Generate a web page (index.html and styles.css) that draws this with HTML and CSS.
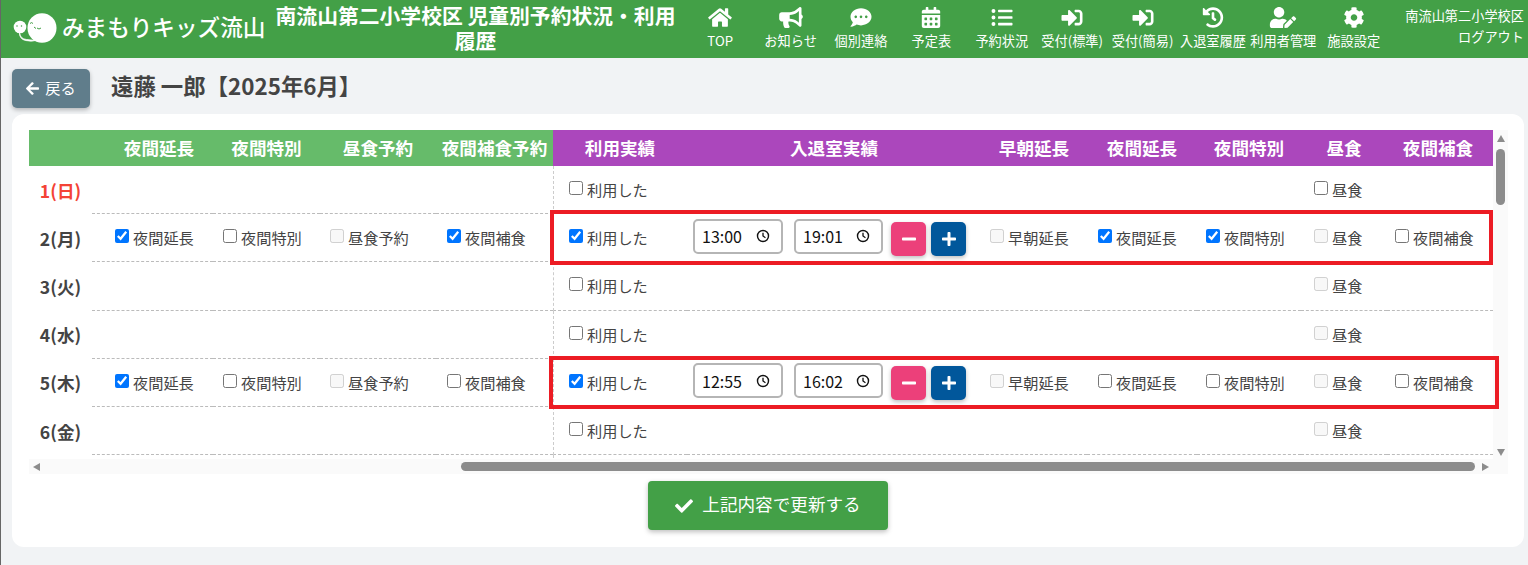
FILE: index.html
```html
<!DOCTYPE html>
<html lang="ja">
<head>
<meta charset="utf-8">
<title>児童別予約状況・利用履歴</title>
<link rel="stylesheet" href="styles.css">
</head>
<body>
<svg class="sprite" xmlns="http://www.w3.org/2000/svg">
  <symbol id="i-home" viewBox="0 0 576 512"><path d="M280.37 148.26L96 300.11V464a16 16 0 0 0 16 16l112.06-.29a16 16 0 0 0 15.92-16V368a16 16 0 0 1 16-16h64a16 16 0 0 1 16 16v95.64a16 16 0 0 0 16 16.05L464 480a16 16 0 0 0 16-16V300L295.67 148.26a12.19 12.19 0 0 0-15.3 0zM571.6 251.47L488 182.56V44.05a12 12 0 0 0-12-12h-56a12 12 0 0 0-12 12v72.61L318.47 43a48 48 0 0 0-61 0L4.34 251.47a12 12 0 0 0-1.6 16.9l25.5 31A12 12 0 0 0 45.15 301l235.22-193.74a12.19 12.19 0 0 1 15.3 0L530.9 301a12 12 0 0 0 16.9-1.6l25.5-31a12 12 0 0 0-1.7-16.93z"/></symbol>
  <symbol id="i-bullhorn" viewBox="0 0 576 512"><path d="M576 240c0-23.63-12.95-44.04-32-55.12V32.01C544 23.26 537.02 0 512 0c-7.12 0-14.19 2.38-19.98 7.02l-85.03 68.03C364.28 109.19 310.66 128 256 128H64c-35.35 0-64 28.65-64 64v96c0 35.35 28.65 64 64 64h33.7c-1.39 10.48-2.18 21.14-2.18 32 0 39.77 9.26 77.35 25.56 110.94 5.19 10.69 16.52 17.06 28.4 17.06h74.28c26.05 0 41.69-29.84 25.9-50.56-16.4-21.52-26.15-48.36-26.15-77.44 0-11.11 1.62-21.79 4.41-32H256c54.66 0 108.28 18.81 150.98 52.95l85.03 68.03a32.023 32.023 0 0 0 19.98 7.02c24.92 0 32-22.78 32-32V295.13C563.05 284.04 576 263.63 576 240zm-96 141.42l-33.05-26.44C392.95 311.78 325.12 288 256 288v-96c69.12 0 136.95-23.78 190.95-66.98L480 98.58v282.84z"/></symbol>
  <symbol id="i-comment" viewBox="0 0 512 512"><path d="M256 32C114.6 32 0 125.1 0 240c0 49.6 21.4 95 57 130.7C44.5 421.1 2.7 466 2.2 466.5c-2.2 2.3-2.8 5.7-1.5 8.7S4.8 480 8 480c66.3 0 116-31.8 140.6-51.4 32.7 12.3 69 19.4 107.4 19.4 141.4 0 256-93.1 256-208S397.4 32 256 32zM128 272c-17.7 0-32-14.3-32-32s14.3-32 32-32 32 14.3 32 32-14.3 32-32 32zm128 0c-17.7 0-32-14.3-32-32s14.3-32 32-32 32 14.3 32 32-14.3 32-32 32zm128 0c-17.7 0-32-14.3-32-32s14.3-32 32-32 32 14.3 32 32-14.3 32-32 32z"/></symbol>
  <symbol id="i-calendar" viewBox="0 0 448 512"><path d="M0 464c0 26.5 21.5 48 48 48h352c26.5 0 48-21.5 48-48V192H0v272zm320-196c0-6.6 5.4-12 12-12h40c6.6 0 12 5.4 12 12v40c0 6.6-5.4 12-12 12h-40c-6.6 0-12-5.4-12-12v-40zm0 128c0-6.6 5.4-12 12-12h40c6.6 0 12 5.4 12 12v40c0 6.6-5.4 12-12 12h-40c-6.6 0-12-5.4-12-12v-40zM192 268c0-6.6 5.4-12 12-12h40c6.6 0 12 5.4 12 12v40c0 6.6-5.4 12-12 12h-40c-6.6 0-12-5.4-12-12v-40zm0 128c0-6.6 5.4-12 12-12h40c6.6 0 12 5.4 12 12v40c0 6.6-5.4 12-12 12h-40c-6.6 0-12-5.4-12-12v-40zM64 268c0-6.6 5.4-12 12-12h40c6.6 0 12 5.4 12 12v40c0 6.6-5.4 12-12 12H76c-6.6 0-12-5.4-12-12v-40zm0 128c0-6.6 5.4-12 12-12h40c6.6 0 12 5.4 12 12v40c0 6.6-5.4 12-12 12H76c-6.6 0-12-5.4-12-12v-40zM400 64h-48V16c0-8.8-7.2-16-16-16h-32c-8.8 0-16 7.2-16 16v48H160V16c0-8.8-7.2-16-16-16h-32c-8.8 0-16 7.2-16 16v48H48C21.5 64 0 85.5 0 112v48h448v-48c0-26.5-21.5-48-48-48z"/></symbol>
  <symbol id="i-list" viewBox="0 0 512 512"><path d="M48 48a48 48 0 1 0 48 48 48 48 0 0 0-48-48zm0 160a48 48 0 1 0 48 48 48 48 0 0 0-48-48zm0 160a48 48 0 1 0 48 48 48 48 0 0 0-48-48zm448 16H176a16 16 0 0 0-16 16v32a16 16 0 0 0 16 16h320a16 16 0 0 0 16-16v-32a16 16 0 0 0-16-16zm0-320H176a16 16 0 0 0-16 16v32a16 16 0 0 0 16 16h320a16 16 0 0 0 16-16V80a16 16 0 0 0-16-16zm0 160H176a16 16 0 0 0-16 16v32a16 16 0 0 0 16 16h320a16 16 0 0 0 16-16v-32a16 16 0 0 0-16-16z"/></symbol>
  <symbol id="i-signin" viewBox="0 0 512 512"><path d="M416 448h-84c-6.6 0-12-5.4-12-12v-40c0-6.6 5.4-12 12-12h84c17.7 0 32-14.3 32-32V160c0-17.7-14.3-32-32-32h-84c-6.6 0-12-5.4-12-12V76c0-6.6 5.4-12 12-12h84c53 0 96 43 96 96v192c0 53-43 96-96 96zm-47-201L201 79c-15-15-41-4.5-41 17v96H24c-13.3 0-24 10.7-24 24v96c0 13.3 10.7 24 24 24h136v96c0 21.5 26 32 41 17l168-168c9.3-9.4 9.3-24.6 0-34z"/></symbol>
  <symbol id="i-history" viewBox="0 0 512 512"><path d="M504 255.531c.253 136.64-111.18 248.372-247.82 248.468-59.015.042-113.223-20.53-155.822-54.911-11.077-8.94-11.905-25.541-1.839-35.607l11.267-11.267c8.609-8.609 22.353-9.551 31.891-1.984C173.062 425.135 212.781 440 256 440c101.705 0 184-82.311 184-184 0-101.705-82.311-184-184-184-48.814 0-93.149 18.969-126.068 49.932l50.754 50.754c10.08 10.08 2.941 27.314-11.313 27.314H24c-8.837 0-16-7.163-16-16V38.627c0-14.254 17.234-21.393 27.314-11.314l49.372 49.372C129.209 34.136 189.552 8 256 8c136.81 0 247.747 110.78 248 247.531zm-180.912 78.784l9.823-12.63c8.138-10.463 6.253-25.542-4.21-33.679L288 256.349V152c0-13.255-10.745-24-24-24h-16c-13.255 0-24 10.745-24 24v135.651l65.409 50.874c10.463 8.137 25.541 6.253 33.679-4.21z"/></symbol>
  <symbol id="i-useredit" viewBox="0 0 640 512"><path d="M224 256c70.7 0 128-57.3 128-128S294.7 0 224 0 96 57.3 96 128s57.3 128 128 128zm89.6 32h-16.7c-22.2 10.2-46.9 16-72.9 16s-50.6-5.8-72.9-16h-16.7C60.2 288 0 348.2 0 422.4V464c0 26.5 21.5 48 48 48h274.9c-2.4-6.8-3.4-14-2.6-21.3l6.8-60.9 1.2-11.1 7.9-7.9 77.3-77.3c-24.5-27.7-60-45.5-99.9-45.5zm45.3 145.3l-6.8 61c-1.1 10.2 7.5 18.8 17.6 17.6l60.9-6.8 137.9-137.9-71.7-71.7-137.9 137.8zM633 268.9L595.1 231c-9.3-9.3-24.5-9.3-33.8 0l-37.8 37.8-4.1 4.1 71.8 71.7 41.8-41.8c9.3-9.4 9.3-24.5 0-33.9z"/></symbol>
  <symbol id="i-cog" viewBox="0 0 512 512"><path d="M487.4 315.7l-42.6-24.6c4.3-23.2 4.3-47 0-70.2l42.6-24.6c4.9-2.8 7.1-8.6 5.5-14-11.1-35.6-30-67.8-54.7-94.6-3.8-4.1-10-5.1-14.8-2.3L380.8 110c-17.9-15.4-38.5-27.3-60.8-35.1V25.8c0-5.6-3.9-10.5-9.4-11.7-36.7-8.2-74.3-7.8-109.2 0-5.5 1.2-9.4 6.1-9.4 11.7V75c-22.2 7.9-42.8 19.8-60.8 35.1L88.7 85.5c-4.9-2.8-11-1.9-14.8 2.3-24.7 26.7-43.6 58.9-54.7 94.6-1.7 5.4.6 11.2 5.5 14L67.3 221c-4.3 23.2-4.3 47 0 70.2l-42.6 24.6c-4.9 2.8-7.1 8.6-5.5 14 11.1 35.6 30 67.8 54.7 94.6 3.8 4.1 10 5.1 14.8 2.3l42.6-24.6c17.9 15.4 38.5 27.3 60.8 35.1v49.2c0 5.6 3.9 10.5 9.4 11.7 36.7 8.2 74.3 7.8 109.2 0 5.5-1.2 9.4-6.1 9.4-11.7v-49.2c22.2-7.9 42.8-19.8 60.8-35.1l42.6 24.6c4.9 2.8 11 1.9 14.8-2.3 24.7-26.7 43.6-58.9 54.7-94.6 1.5-5.5-.7-11.3-5.6-14.1zM256 336c-44.1 0-80-35.9-80-80s35.9-80 80-80 80 35.9 80 80-35.9 80-80 80z"/></symbol>
  <symbol id="i-check" viewBox="0 0 512 512"><path d="M173.898 439.404l-166.4-166.4c-9.997-9.997-9.997-26.206 0-36.204l36.203-36.204c9.997-9.998 26.207-9.998 36.204 0L192 312.69 432.095 72.596c9.997-9.997 26.207-9.997 36.204 0l36.203 36.204c9.997 9.997 9.997 26.206 0 36.204l-294.4 294.401c-9.998 9.997-26.207 9.997-36.204-.001z"/></symbol>
  <symbol id="i-left" viewBox="0 0 448 512"><path d="M257.5 445.1l-22.2 22.2c-9.4 9.4-24.6 9.4-33.9 0L7 273c-9.4-9.4-9.4-24.6 0-33.9L201.4 44.7c9.4-9.4 24.6-9.4 33.9 0l22.2 22.2c9.5 9.5 9.3 25-.4 34.3L136.6 216H424c13.3 0 24 10.7 24 24v32c0 13.3-10.7 24-24 24H136.6l120.5 114.8c9.8 9.3 10 24.8.4 34.3z"/></symbol>
  <symbol id="i-plus" viewBox="0 0 448 512"><path d="M416 208H272V64c0-17.67-14.33-32-32-32h-32c-17.67 0-32 14.33-32 32v144H32c-17.67 0-32 14.33-32 32v32c0 17.67 14.33 32 32 32h144v144c0 17.67 14.33 32 32 32h32c17.67 0 32-14.33 32-32V304h144c17.67 0 32-14.33 32-32v-32c0-17.67-14.33-32-32-32z"/></symbol>
  <symbol id="i-minus" viewBox="0 0 448 512"><path d="M416 208H32c-17.67 0-32 14.33-32 32v32c0 17.67 14.33 32 32 32h384c17.67 0 32-14.33 32-32v-32c0-17.67-14.33-32-32-32z"/></symbol>
  <symbol id="i-clock" viewBox="0 0 16 16"><circle cx="8" cy="8" r="6.300" fill="none" stroke="currentColor" stroke-width="1.600"/><path d="M8 4.200V8l2.800 2" fill="none" stroke="currentColor" stroke-width="1.500"/></symbol>
</svg>

<header class="topbar">
  <a class="logo" href="#">
    <svg class="logo-mark" viewBox="0 0 50 34" xmlns="http://www.w3.org/2000/svg" aria-hidden="true">
      <ellipse cx="33" cy="17" rx="14.500" ry="14.800" fill="#fff"/>
      <path d="M21 12.500q1.500-1.800 3 0M28 17q2 2 4 0M25 16l2 1.500" fill="none" stroke="#43a047" stroke-width="1"/>
      <circle cx="11" cy="16" r="6.300" fill="#fff"/>
      <path d="M8 15h.01M12.500 15h.01" stroke="#43a047" stroke-width="1.500" stroke-linecap="round"/>
      <path d="M10.500 22q1 6 7 6.500q6 1 12 .5q-7 2-13 .5q-6-1.500-6-7.500z" fill="#fff" stroke="#fff" stroke-width=".8"/>
    </svg>
    <span class="logo-text">みまもりキッズ流山</span>
  </a>
  <h1 class="page-title">南流山第二小学校区 児童別予約状況・利用履歴</h1>
  <nav class="mainnav">
    <a class="nav-item" href="#"><svg class="nav-icon"><use href="#i-home"/></svg><span>TOP</span></a>
    <a class="nav-item" href="#"><svg class="nav-icon"><use href="#i-bullhorn"/></svg><span>お知らせ</span></a>
    <a class="nav-item" href="#"><svg class="nav-icon"><use href="#i-comment"/></svg><span>個別連絡</span></a>
    <a class="nav-item" href="#"><svg class="nav-icon"><use href="#i-calendar"/></svg><span>予定表</span></a>
    <a class="nav-item" href="#"><svg class="nav-icon"><use href="#i-list"/></svg><span>予約状況</span></a>
    <a class="nav-item" href="#"><svg class="nav-icon"><use href="#i-signin"/></svg><span>受付(標準)</span></a>
    <a class="nav-item" href="#"><svg class="nav-icon"><use href="#i-signin"/></svg><span>受付(簡易)</span></a>
    <a class="nav-item" href="#"><svg class="nav-icon"><use href="#i-history"/></svg><span>入退室履歴</span></a>
    <a class="nav-item" href="#"><svg class="nav-icon"><use href="#i-useredit"/></svg><span>利用者管理</span></a>
    <a class="nav-item" href="#"><svg class="nav-icon"><use href="#i-cog"/></svg><span>施設設定</span></a>
  </nav>
  <div class="account">
    <span>南流山第二小学校区</span>
    <a href="#">ログアウト</a>
  </div>
</header>

<main class="content">
  <div class="toolbar">
    <a class="back-btn" href="#"><svg class="back-icon"><use href="#i-left"/></svg><span class="back-label">戻る</span></a>
    <h2 class="child-name">遠藤 一郎【2025年6月】</h2>
  </div>

  <section class="card">
    <div class="frame">
      <div class="viewport">
        <table class="days">
          <colgroup>
            <col class="c-date"><col class="c-a"><col class="c-b"><col class="c-c"><col class="c-d">
            <col class="c-e"><col class="c-f"><col class="c-g"><col class="c-h"><col class="c-i"><col class="c-j"><col class="c-k">
          </colgroup>
          <thead>
            <tr>
              <th class="green"></th>
              <th class="green first">夜間延長</th>
              <th class="green">夜間特別</th>
              <th class="green">昼食予約</th>
              <th class="green">夜間補食予約</th>
              <th class="purple">利用実績</th>
              <th class="purple">入退室実績</th>
              <th class="purple">早朝延長</th>
              <th class="purple">夜間延長</th>
              <th class="purple">夜間特別</th>
              <th class="purple">昼食</th>
              <th class="purple last">夜間補食</th>
            </tr>
          </thead>
          <tbody>
            <tr>
              <th class="date sunday" scope="row">1(日)</th>
              <td></td><td></td><td></td><td></td>
              <td class="used"><label class="chk"><input type="checkbox">利用した</label></td>
              <td></td><td></td><td></td><td></td>
              <td><label class="chk"><input type="checkbox">昼食</label></td>
              <td></td>
            </tr>
            <tr>
              <th class="date" scope="row">2(月)</th>
              <td><label class="chk"><input type="checkbox" checked>夜間延長</label></td>
              <td><label class="chk"><input type="checkbox">夜間特別</label></td>
              <td><label class="chk"><input type="checkbox" disabled>昼食予約</label></td>
              <td><label class="chk"><input type="checkbox" checked>夜間補食</label></td>
              <td class="used"><label class="chk"><input type="checkbox" checked>利用した</label></td>
              <td>
                <div class="times">
                  <span class="time">13:00<svg class="clock"><use href="#i-clock"/></svg></span>
                  <span class="time">19:01<svg class="clock"><use href="#i-clock"/></svg></span>
                  <button class="step minus" type="button" aria-label="減らす"><svg><use href="#i-minus"/></svg></button>
                  <button class="step plus" type="button" aria-label="増やす"><svg><use href="#i-plus"/></svg></button>
                </div>
              </td>
              <td><label class="chk"><input type="checkbox" disabled>早朝延長</label></td>
              <td><label class="chk"><input type="checkbox" checked>夜間延長</label></td>
              <td><label class="chk"><input type="checkbox" checked>夜間特別</label></td>
              <td><label class="chk"><input type="checkbox" disabled>昼食</label></td>
              <td><label class="chk"><input type="checkbox">夜間補食</label></td>
            </tr>
            <tr>
              <th class="date" scope="row">3(火)</th>
              <td></td><td></td><td></td><td></td>
              <td class="used"><label class="chk"><input type="checkbox">利用した</label></td>
              <td></td><td></td><td></td><td></td>
              <td><label class="chk"><input type="checkbox" disabled>昼食</label></td>
              <td></td>
            </tr>
            <tr>
              <th class="date" scope="row">4(水)</th>
              <td></td><td></td><td></td><td></td>
              <td class="used"><label class="chk"><input type="checkbox">利用した</label></td>
              <td></td><td></td><td></td><td></td>
              <td><label class="chk"><input type="checkbox" disabled>昼食</label></td>
              <td></td>
            </tr>
            <tr>
              <th class="date" scope="row">5(木)</th>
              <td><label class="chk"><input type="checkbox" checked>夜間延長</label></td>
              <td><label class="chk"><input type="checkbox">夜間特別</label></td>
              <td><label class="chk"><input type="checkbox" disabled>昼食予約</label></td>
              <td><label class="chk"><input type="checkbox">夜間補食</label></td>
              <td class="used"><label class="chk"><input type="checkbox" checked>利用した</label></td>
              <td>
                <div class="times">
                  <span class="time">12:55<svg class="clock"><use href="#i-clock"/></svg></span>
                  <span class="time">16:02<svg class="clock"><use href="#i-clock"/></svg></span>
                  <button class="step minus" type="button" aria-label="減らす"><svg><use href="#i-minus"/></svg></button>
                  <button class="step plus" type="button" aria-label="増やす"><svg><use href="#i-plus"/></svg></button>
                </div>
              </td>
              <td><label class="chk"><input type="checkbox" disabled>早朝延長</label></td>
              <td><label class="chk"><input type="checkbox">夜間延長</label></td>
              <td><label class="chk"><input type="checkbox">夜間特別</label></td>
              <td><label class="chk"><input type="checkbox" disabled>昼食</label></td>
              <td><label class="chk"><input type="checkbox">夜間補食</label></td>
            </tr>
            <tr>
              <th class="date" scope="row">6(金)</th>
              <td></td><td></td><td></td><td></td>
              <td class="used"><label class="chk"><input type="checkbox">利用した</label></td>
              <td></td><td></td><td></td><td></td>
              <td><label class="chk"><input type="checkbox" disabled>昼食</label></td>
              <td></td>
            </tr>
            <tr>
              <th class="date" scope="row"></th>
              <td></td><td></td><td></td><td></td>
              <td class="used"></td>
              <td></td><td></td><td></td><td></td><td></td><td></td>
            </tr>
          </tbody>
        </table>
      </div>
      <div class="vbar"><i class="arrow up"></i><i class="vthumb"></i><i class="arrow down"></i></div>
      <div class="hbar"><i class="arrow lft"></i><i class="hthumb"></i><i class="arrow rgt"></i></div>
      <div class="corner"></div>
      <div class="mark mark-a"></div>
      <div class="mark mark-b"></div>
    </div>
    <button class="submit" type="button"><svg class="submit-icon"><use href="#i-check"/></svg><span class="submit-label">上記内容で更新する</span></button>
  </section>
</main>
</body>
</html>
```

FILE: styles.css
```css
* { box-sizing: border-box; }
html, body { margin: 0; height: 100%; }
body {
  background: #f1f3f5;
  border-left: 1px solid #666;
  color: #444;
  font-family: "Noto Sans CJK JP", "Noto Sans", sans-serif;
  font-size: 15.2px;
  overflow: hidden;
}
a { color: inherit; text-decoration: none; }
.sprite { display: none; }

/* header */
.topbar {
  display: flex;
  align-items: center;
  height: 58px;
  background: #43a047;
  color: #fff;
  margin-left: -1px;
}
.logo { display: flex; align-items: center; width: 266px; flex: none; padding-left: 8.5px; }
.logo-mark { width: 50px; height: 34px; flex: none; margin-top: -3px; }
.logo-text { font-size: 22.6px; font-weight: 500; white-space: nowrap; margin-left: 3.5px; line-height: 1; margin-top: -4px; }
.page-title {
  width: 419px;
  flex: none;
  margin: -3px 0 0;
  padding: 0 8px;
  font-size: 20.8px;
  font-weight: 700;
  line-height: 25px;
  text-align: center;
}
.mainnav { display: flex; flex: none; margin-top: -1px; }
.nav-item {
  width: 70.4px;
  display: flex;
  flex-direction: column;
  align-items: center;
  gap: 4px;
  font-size: 13.2px;
  line-height: 18px;
  white-space: nowrap;
}
.nav-item span { margin: 0 -6px; }
.nav-icon { width: 28px; height: 21px; fill: #fff; }
.account {
  flex: 1;
  display: flex;
  flex-direction: column;
  align-items: flex-end;
  gap: 6px;
  margin-top: -6px;
  padding-right: 4px;
  font-size: 13.2px;
  line-height: 15px;
  white-space: nowrap;
}

/* page */
.content { padding: 11px 4px 0 11px; }
.toolbar { display: flex; align-items: center; gap: 21px; height: 39px; margin-bottom: 6px; }
.back-btn {
  width: 78px;
  height: 39px;
  display: flex;
  align-items: center;
  justify-content: center;
  gap: 6px;
  background: #607d8b;
  color: #fff;
  border-radius: 5px;
  box-shadow: 0 2px 4px rgba(0, 0, 0, .25);
  font-size: 15.2px;
}
.back-label { margin-top: -3px; }
.back-icon { width: 13px; height: 15px; fill: #fff; margin-top: -1px; }
.child-name { margin: -8px 0 0; font-size: 22.4px; font-weight: 700; color: #444; line-height: 30px; }

.card {
  height: 433px;
  background: #fff;
  border-radius: 12px;
  padding: 16px 17px 0;
  display: flex;
  flex-direction: column;
}

/* scrolling frame */
.frame {
  position: relative;
  display: grid;
  grid-template-columns: 1464px 15px;
  grid-template-rows: 329px 16px;
}
.viewport { overflow: hidden; }
.vbar, .hbar, .corner { background: #fafafa; }
.vbar { display: flex; flex-direction: column; align-items: center; padding: 5px 0 3px; }
.vthumb { width: 9px; height: 56px; margin-top: 7px; border-radius: 5px; background: #8c8c8c; }
.vbar .down { margin-top: auto; }
.hbar { display: flex; align-items: center; padding: 0 4px; height: 15px; }
.hthumb { width: 1014px; height: 9px; margin-left: 421px; border-radius: 5px; background: #8c8c8c; }
.hbar .rgt { margin-left: auto; }
.corner { height: 15px; }
.arrow { display: block; width: 0; height: 0; border-style: solid; border-color: transparent; }
.arrow.up { border-width: 0 4.5px 7px; border-bottom-color: #8c8c8c; }
.arrow.down { border-width: 7px 4.5px 0; border-top-color: #8c8c8c; }
.arrow.lft { border-width: 4.5px 7px 4.5px 0; border-right-color: #8c8c8c; }
.arrow.rgt { border-width: 4.5px 0 4.5px 7px; border-left-color: #8c8c8c; }

.mark { position: absolute; border: 4px solid #ec1c24; pointer-events: none; }
.mark-a { left: 521px; top: 80px; width: 943px; height: 55px; }
.mark-b { left: 520px; top: 226px; width: 950px; height: 53px; }

/* table */
.days { width: 1464px; table-layout: fixed; border-collapse: separate; border-spacing: 0; }
.c-date { width: 63px; }
.c-a { width: 121px; }
.c-b { width: 107px; }
.c-c { width: 116px; }
.c-d { width: 117px; }
.c-e { width: 134px; }
.c-f { width: 294px; }
.c-g { width: 106px; }
.c-h { width: 110px; }
.c-i { width: 104px; }
.c-j { width: 86px; }
.c-k { width: 106px; }

.days thead th {
  height: 36px;
  padding: 0 0 2px;
  color: #fff;
  font-size: 17.6px;
  font-weight: 700;
  text-align: center;
  white-space: nowrap;
}
.days .green { background: #66bb6a; }
.days .purple { background: #ab47bc; }
.days .first { padding-left: 13px; }
.days .last { padding-right: 4px; }
.days tbody tr { height: 48.2px; }
.days td { padding: 0; border-bottom: 1px dashed #bbb; white-space: nowrap; }
.date { padding: 0; font-size: 17.6px; font-weight: 700; text-align: center; color: #444; }
.date.sunday { color: #f44336; }
.days td.used { border-left: 1px dashed #ccc; padding-left: 15px; }
.days td:nth-child(2) { padding-left: 23px; }
.days td:nth-child(3) { padding-left: 10px; }
.days td:nth-child(4) { padding-left: 10px; }
.days td:nth-child(5) { padding-left: 11px; }
.days td:nth-child(7) { padding-left: 6px; }
.days td:nth-child(8) { padding-left: 9px; }
.days td:nth-child(9) { padding-left: 11px; }
.days td:nth-child(10) { padding-left: 9px; }
.days td:nth-child(11) { padding-left: 13px; }
.days td:nth-child(12) { padding-left: 8px; }

.chk { display: inline-flex; align-items: center; gap: 4px; line-height: 20px; padding-bottom: 3px; color: #444; }
.chk input { width: 14px; height: 14px; margin: -2px 0 0; flex: none; }

.times { display: flex; align-items: center; margin-top: 2px; }
.time {
  width: 90px;
  height: 35px;
  margin-right: 11px;
  margin-bottom: 5px;
  display: flex;
  align-items: center;
  justify-content: space-between;
  padding: 0 11px 0 7px;
  border: 2px solid #b5b5b5;
  border-radius: 5px;
  background: #fff;
  color: #111;
  font-size: 16px;
}
.time + .time { width: 89px; margin-right: 8px; }
.clock { width: 14px; height: 14px; margin-top: 0; color: #111; }
.step {
  width: 35px;
  height: 34px;
  padding: 0;
  border: 0;
  border-radius: 5px;
  display: flex;
  align-items: center;
  justify-content: center;
  box-shadow: 0 2px 4px rgba(0, 0, 0, .25);
}
.step svg { width: 14px; height: 16px; fill: #fff; }
.step.minus { background: #ec407a; margin-right: 5px; }
.step.plus { background: #01579b; }

.submit {
  align-self: center;
  flex: none;
  width: 240px;
  height: 49px;
  margin-top: 6px;
  display: flex;
  align-items: center;
  justify-content: center;
  gap: 9px;
  border: 0;
  border-radius: 4px;
  background: #43a047;
  color: #fff;
  font-family: inherit;
  font-size: 17.6px;
  box-shadow: 0 2px 5px rgba(0, 0, 0, .25);
}
.submit-label { margin-top: -4px; }
.submit-icon { width: 18px; height: 18px; fill: #fff; }
```
